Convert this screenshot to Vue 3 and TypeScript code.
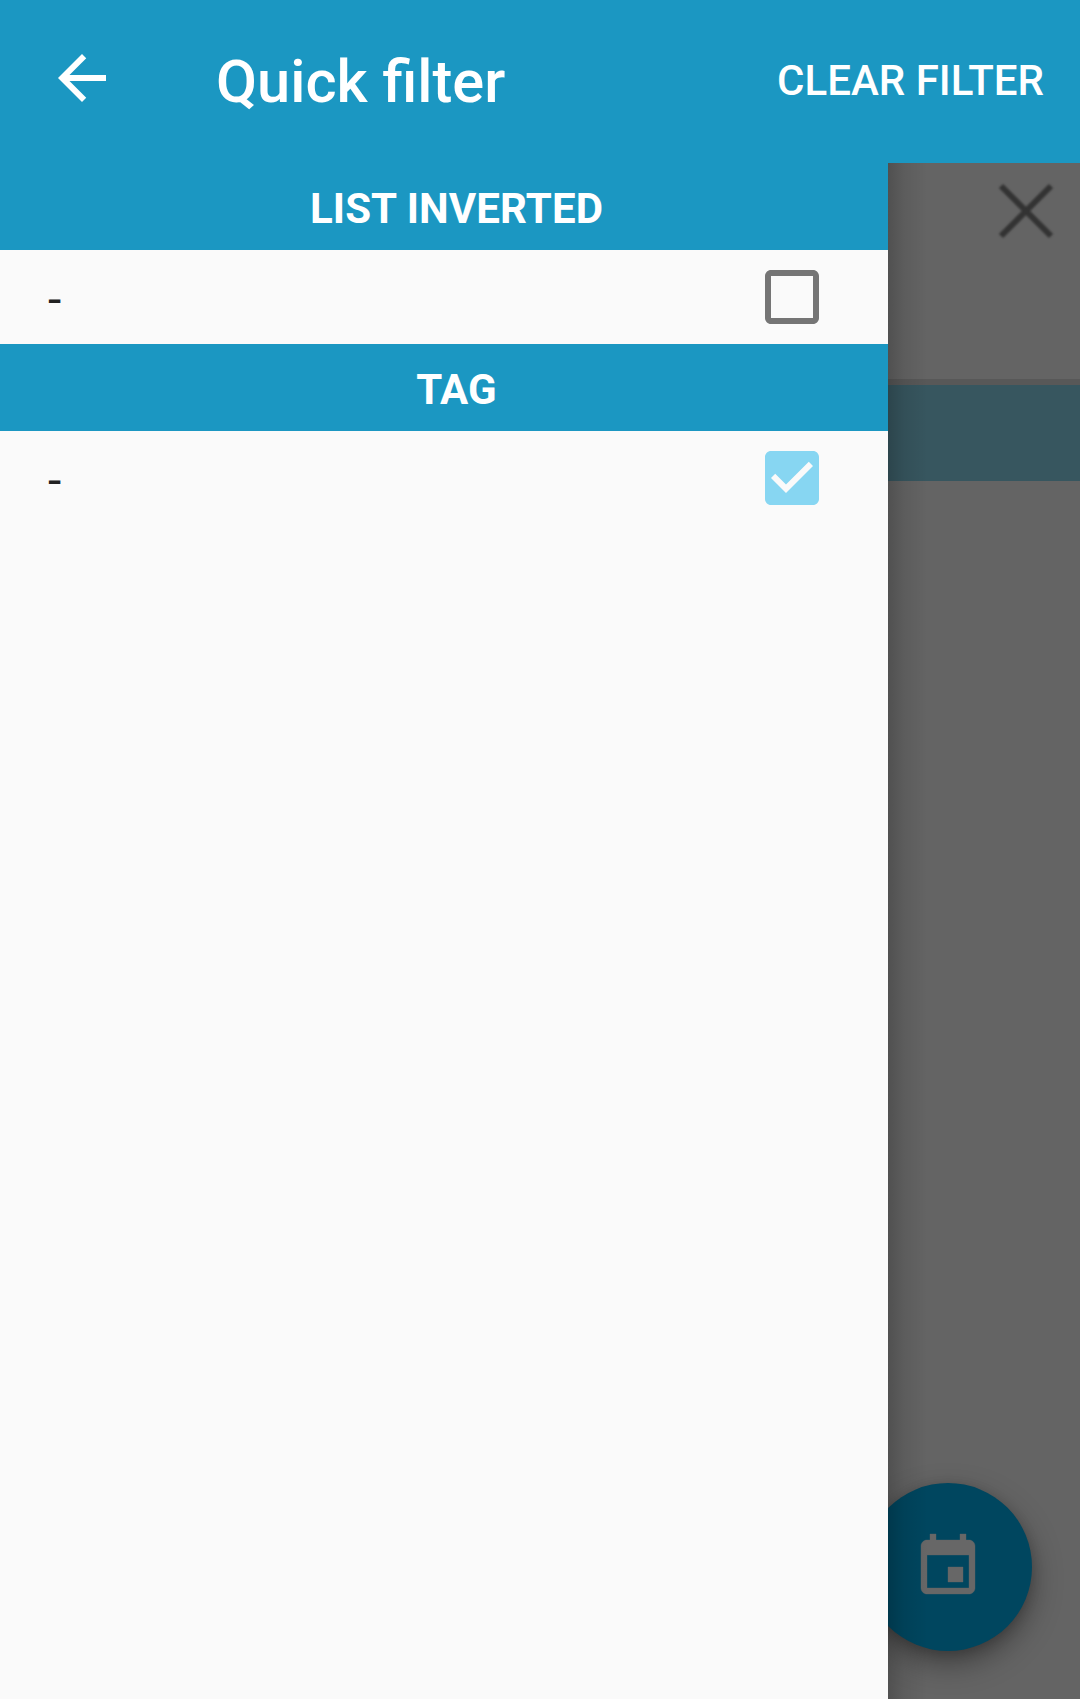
<script setup lang="ts">
import { ref } from 'vue'

interface FilterGroup {
  title: string
  label: string
  checked: boolean
}

const groups = ref<FilterGroup[]>([
  { title: 'LIST INVERTED', label: '-', checked: false },
  { title: 'TAG', label: '-', checked: true },
])

function clearFilter() {
  groups.value.forEach((g) => (g.checked = false))
}
</script>

<template>
  <div class="screen">
    <header class="toolbar">
      <svg class="back" viewBox="0 0 24 24" aria-label="Back">
        <path d="M20 11H7.83l5.59-5.59L12 4l-8 8 8 8 1.41-1.41L7.83 13H20v-2z" />
      </svg>
      <h1 class="title">Quick filter</h1>
      <button class="clear" @click="clearFilter">CLEAR FILTER</button>
    </header>
    <div class="body">
      <main class="drawer">
        <section v-for="group in groups" :key="group.title">
          <h2 class="group-title">{{ group.title }}</h2>
          <div class="row" @click="group.checked = !group.checked">
            <span class="label">{{ group.label }}</span>
            <svg class="box" :class="{ on: group.checked }" viewBox="3 3 18 18">
              <path
                v-if="group.checked"
                d="M19 3H5c-1.11 0-2 .9-2 2v14c0 1.1.89 2 2 2h14c1.11 0 2-.9 2-2V5c0-1.1-.89-2-2-2zm-9 14l-5-5 1.41-1.41L10 14.17l7.59-7.59L19 8l-9 9z"
              />
              <path
                v-else
                d="M19 5v14H5V5h14m0-2H5c-1.1 0-2 .9-2 2v14c0 1.1.9 2 2 2h14c1.1 0 2-.9 2-2V5c0-1.1-.9-2-2-2z"
              />
            </svg>
          </div>
        </section>
      </main>
      <aside class="backdrop">
        <div class="search">
          <svg class="close" viewBox="0 0 54 54">
            <path d="M2 2L52 52M52 2L2 52" />
          </svg>
        </div>
        <div class="band"></div>
        <div class="fab">
          <svg viewBox="0 0 24 24">
            <path
              d="M17 12h-5v5h5v-5zM16 1v2H8V1H6v2H5c-1.11 0-1.99.9-1.99 2L3 19c0 1.1.89 2 2 2h14c1.1 0 2-.9 2-2V5c0-1.1-.9-2-2-2h-1V1h-2zm3 18H5V8h14v11z"
            />
          </svg>
        </div>
        <div class="edge"></div>
      </aside>
    </div>
  </div>
</template>

<style>
body {
  margin: 0;
}
</style>

<style scoped>
.screen {
  width: 1080px;
  height: 1699px;
  display: flex;
  flex-direction: column;
  overflow: hidden;
  font-family: Roboto, sans-serif;
}
.toolbar {
  height: 163px;
  flex: none;
  box-sizing: border-box;
  padding: 0 36px 0 46px;
  display: flex;
  align-items: center;
  background: #1b97c2;
  color: #fff;
}
.back {
  width: 72px;
  height: 72px;
  margin-bottom: 7px;
  fill: #fff;
}
.title {
  margin: 0 auto 0 98px;
  font-size: 59.6px;
  line-height: 70px;
  font-weight: 500;
}
.clear {
  border: 0;
  padding: 0;
  margin-bottom: 2px;
  background: none;
  color: inherit;
  font: 500 42px/50px Roboto, sans-serif;
}
.body {
  flex: 1;
  display: flex;
  min-height: 0;
}
.drawer {
  width: 888px;
  flex: none;
  background: #fafafa;
}
.group-title {
  margin: 0;
  height: 87px;
  box-sizing: border-box;
  padding: 4px 0 0 25px;
  background: #1b97c2;
  color: #fff;
  text-align: center;
  font-size: 42px;
  line-height: 84px;
  font-weight: 700;
  letter-spacing: 0.1px;
}
.row {
  height: 94px;
  box-sizing: border-box;
  padding: 0 69px 0 48px;
  display: flex;
  align-items: center;
  justify-content: space-between;
}
.label {
  margin-top: 6px;
  color: #212121;
  font-size: 48px;
  line-height: 56px;
}
.box {
  width: 54px;
  height: 54px;
  fill: #757575;
}
.box.on {
  fill: #87d6f2;
}
.backdrop {
  position: relative;
  flex: 1;
  overflow: hidden;
  background: #646464;
}
.search {
  height: 222px;
  box-sizing: border-box;
  padding: 21px 27px 0 0;
  display: flex;
  justify-content: flex-end;
  align-items: flex-start;
  border-bottom: 6px solid #585858;
}
.close {
  width: 54px;
  height: 54px;
  overflow: visible;
  fill: none;
  stroke: #333;
  stroke-width: 6;
  filter: blur(0.8px);
}
.band {
  height: 96px;
  background: #37565f;
}
.fab {
  position: absolute;
  right: 48px;
  bottom: 48px;
  width: 168px;
  height: 168px;
  border-radius: 50%;
  display: flex;
  align-items: center;
  justify-content: center;
  background: #00465f;
  box-shadow: 0 12px 30px rgba(0, 0, 0, 0.38), 0 3px 12px rgba(0, 0, 0, 0.15);
}
.fab svg {
  width: 72px;
  height: 72px;
  fill: #676767;
  stroke: #676767;
  stroke-width: 0.12;
}
.edge {
  position: absolute;
  inset: 0 auto 0 0;
  width: 40px;
  background: linear-gradient(90deg, rgba(0, 0, 0, 0.2), rgba(0, 0, 0, 0.08) 40%, transparent);
}
</style>
